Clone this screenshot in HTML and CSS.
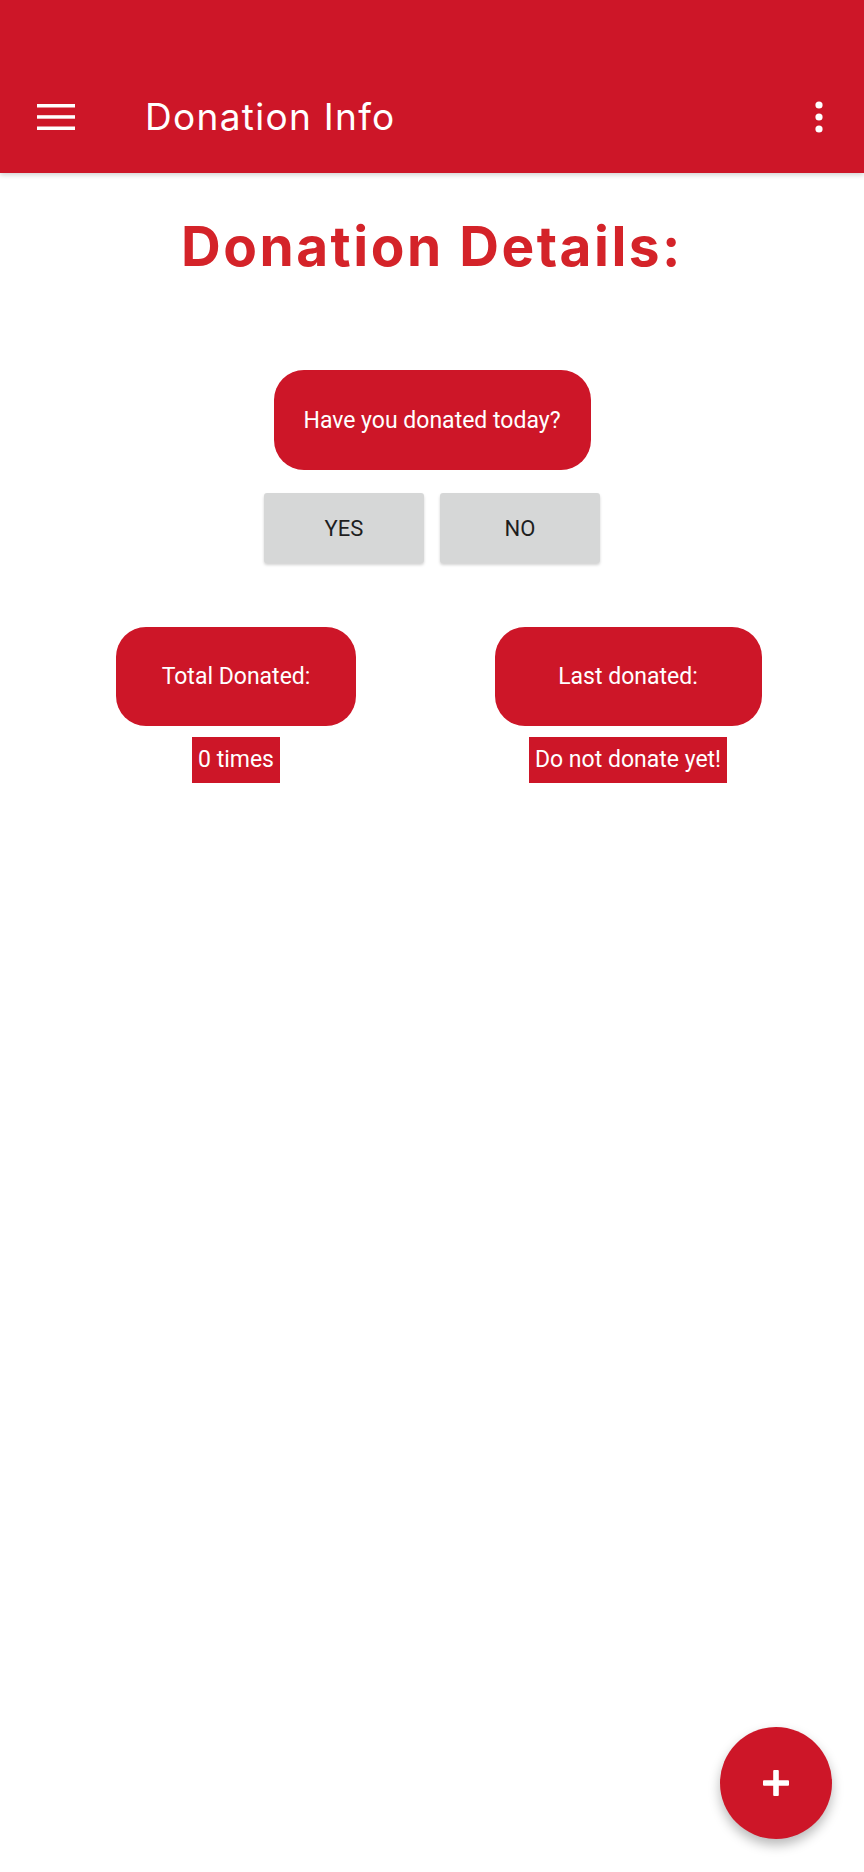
FILE: index.html
```html
<!DOCTYPE html>
<html>
<head>
<meta charset="utf-8">
<link rel="stylesheet" href="styles.css">
</head>
<body>
<header class="appbar">
  <div class="toolbar">
    <svg class="menu" width="38" height="26" viewBox="0 0 38 26"><rect x="0" y="0" width="38" height="3.5" fill="#fff"/><rect x="0" y="11.2" width="38" height="3.5" fill="#fff"/><rect x="0" y="22.5" width="38" height="3.5" fill="#fff"/></svg>
    <div class="title">Donation Info</div>
    <svg class="kebab" width="10" height="32" viewBox="0 0 10 32"><circle cx="5" cy="4" r="3.6" fill="#fff"/><circle cx="5" cy="16" r="3.6" fill="#fff"/><circle cx="5" cy="28" r="3.6" fill="#fff"/></svg>
  </div>
</header>
<main class="content">
  <h1 class="heading">Donation Details:</h1>
  <div class="bubble question">Have you donated today?</div>
  <div class="buttons">
    <button class="btn">YES</button>
    <button class="btn">NO</button>
  </div>
  <div class="stats">
    <div class="col">
      <div class="bubble total">Total Donated:</div>
      <div class="tag">0 times</div>
    </div>
    <div class="col">
      <div class="bubble last">Last donated:</div>
      <div class="tag">Do not donate yet!</div>
    </div>
  </div>
</main>
<button class="fab"><svg width="28" height="28" viewBox="0 0 28 28"><rect x="11.2" y="1" width="5.6" height="26" rx="1" fill="#fff"/><rect x="1" y="11.2" width="26" height="5.6" rx="1" fill="#fff"/></svg></button>
</body>
</html>
```
FILE: styles.css
```css
html, body {
  margin: 0;
  padding: 0;
  background: #fff;
  font-family: Roboto, "Liberation Sans", sans-serif;
}
body {
  width: 864px;
  height: 1872px;
  position: relative;
  overflow: hidden;
}
.appbar {
  background: #cd1628;
  height: 173px;
  box-shadow: 0 2px 5px rgba(0,0,0,0.18);
  position: relative;
  z-index: 1;
}
.toolbar {
  position: relative;
  top: 60px;
  height: 113px;
  display: flex;
  align-items: center;
  padding: 0 0 0 37px;
}
.menu { display: block; }
.title {
  color: #fff;
  font-family: Inter, Roboto, sans-serif;
  font-size: 37px;
  margin-left: 70px;
  letter-spacing: 1.3px;
  flex: 1;
}
.kebab {
  display: block;
  margin-right: 40px;
}
.content {
  display: flex;
  flex-direction: column;
  align-items: center;
}
.heading {
  margin: 40px 0 0;
  font-family: Inter, Roboto, sans-serif;
  font-size: 55px;
  line-height: 67px;
  font-weight: 700;
  color: #d42329;
  letter-spacing: 2.5px;
}
.bubble {
  background: #cd1628;
  color: #fff;
  border-radius: 30px;
  font-size: 23px;
  height: 99px;
  display: flex;
  align-items: center;
  justify-content: center;
  box-sizing: border-box;
}
.question {
  margin-top: 90px;
  width: 317px;
  height: 100px;
}
.buttons {
  display: flex;
  gap: 16px;
  margin-top: 23px;
}
.btn {
  width: 160px;
  height: 70px;
  border: none;
  border-radius: 3px;
  background: #d6d7d7;
  color: #1e1e1e;
  font-family: Roboto, "Liberation Sans", sans-serif;
  font-size: 22px;
  font-weight: 400;
  box-shadow: 0 2px 3px rgba(0,0,0,0.18);
  padding: 0;
}
.stats {
  display: grid;
  grid-template-columns: 1fr 1fr;
  width: 784px;
  margin-top: 64px;
}
.col {
  display: flex;
  flex-direction: column;
  align-items: center;
}
.total { width: 240px; }
.last { width: 267px; }
.tag {
  margin-top: 11px;
  background: #cd1628;
  color: #fff;
  font-size: 23px;
  height: 46px;
  line-height: 46px;
  padding: 0 6px;
}
.fab {
  position: absolute;
  right: 32px;
  bottom: 33px;
  width: 112px;
  height: 112px;
  border-radius: 50%;
  border: none;
  background: #cd1628;
  box-shadow: 0 6px 12px rgba(0,0,0,0.28);
  display: flex;
  align-items: center;
  justify-content: center;
  padding: 0;
}
.fab svg { display: block; }
```
